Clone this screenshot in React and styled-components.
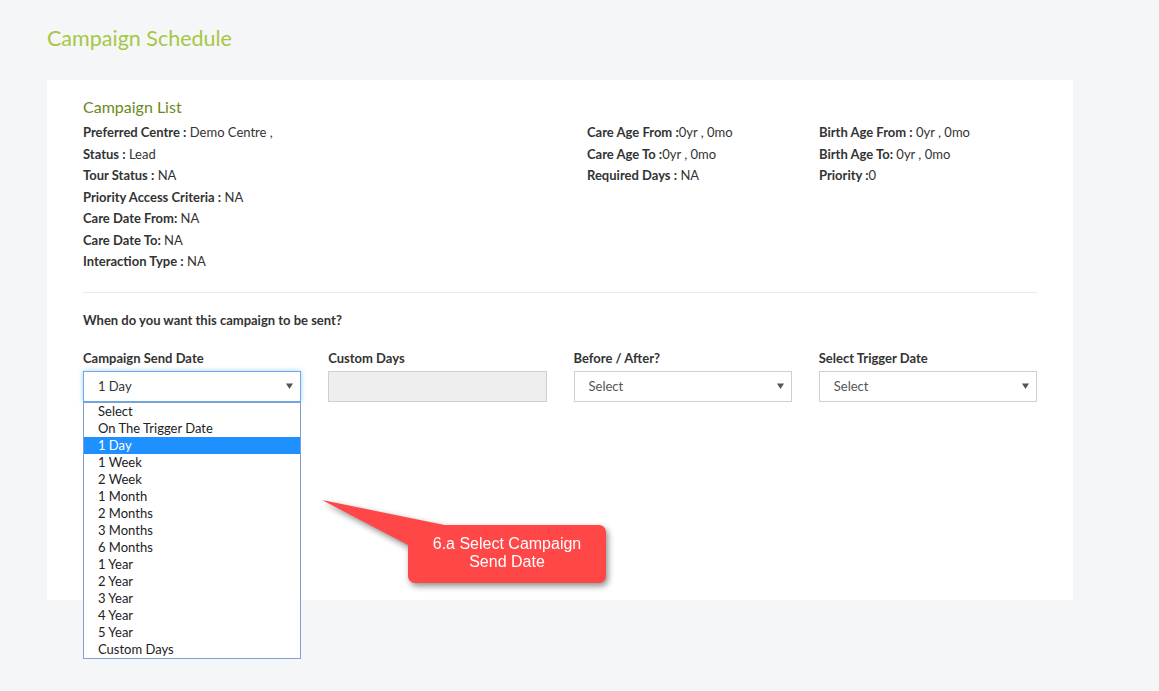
import React from 'react';
import styled, { createGlobalStyle } from 'styled-components';

const GlobalStyle = createGlobalStyle`
  body {
    margin: 0;
    background: #f5f6f8;
    font-family: Lato, "Open Sans", Arial, sans-serif;
    color: #333;
  }
`;

const Page = styled.div`
  padding: 26px 86px 90px 47px;
`;

const PageTitle = styled.h1`
  margin: 0 0 30px;
  font-size: 21.5px;
  line-height: 24px;
  font-weight: 400;
  color: #a6c743;
`;

const Card = styled.div`
  position: relative;
  background: #fff;
  padding: 17px 36px 198px;
`;

const CardTitle = styled.h2`
  margin: 0 0 6px;
  font-size: 16px;
  line-height: 19px;
  font-weight: 400;
  color: #6a8a1e;
`;

const InfoGrid = styled.div`
  display: grid;
  grid-template-columns: 504px 232px 1fr;
`;

const InfoColumn = styled.div`
  display: flex;
  flex-direction: column;
`;

const InfoRow = styled.div`
  font-size: 13px;
  line-height: 21.5px;
  color: #333;
  white-space: nowrap;
  b {
    font-weight: 700;
  }
`;

const Divider = styled.hr`
  border: 0;
  border-top: 1px solid #eaeaea;
  margin: 19px 0 18px;
`;

const Question = styled.p`
  margin: 0 0 20px;
  font-size: 13px;
  line-height: 18px;
  font-weight: 700;
  color: #333;
`;

const FormGrid = styled.div`
  display: grid;
  grid-template-columns: repeat(4, 1fr);
  column-gap: 27px;
`;

const Field = styled.div`
  position: relative;
  display: flex;
  flex-direction: column;
  gap: 4px;
`;

const Label = styled.label`
  font-size: 13px;
  line-height: 18px;
  font-weight: 700;
  color: #333;
`;

const SelectBox = styled.div`
  box-sizing: border-box;
  height: 31px;
  display: flex;
  align-items: center;
  justify-content: space-between;
  padding: 0 7px 0 14px;
  font-size: 13px;
  color: ${p => (p.$open ? '#333' : '#555')};
  background: #fff;
  border: 1px solid ${p => (p.$open ? '#6aa8e8' : '#cfcfcf')};
  box-shadow: ${p => (p.$open ? '0 0 5px rgba(102, 175, 233, 0.6)' : 'none')};
`;

const Input = styled.div`
  box-sizing: border-box;
  height: 31px;
  background: #eee;
  border: 1px solid #cfcfcf;
`;

const Caret = () => (
  <svg width="7" height="6" viewBox="0 0 7 6">
    <path d="M0 0.5h7L3.5 6z" fill="#555" />
  </svg>
);

const OptionList = styled.ul`
  position: absolute;
  top: 53px;
  left: 0;
  right: 0;
  margin: 0;
  padding: 0;
  list-style: none;
  background: #fff;
  border: 1px solid #7f9fd6;
  z-index: 2;
`;

const Option = styled.li`
  height: 17px;
  line-height: 17px;
  padding-left: 14px;
  font-size: 13px;
  color: ${p => (p.$active ? '#fff' : '#222')};
  background: ${p => (p.$active ? '#1e90ff' : 'transparent')};
`;

const Callout = styled.div`
  position: absolute;
  left: 361px;
  top: 445px;
  width: 198px;
  height: 58px;
  filter: drop-shadow(2px 3px 3px rgba(0, 0, 0, 0.45));
  z-index: 3;
`;

const CalloutTail = styled.svg`
  position: absolute;
  left: -86px;
  top: -25px;
`;

const CalloutBody = styled.div`
  position: relative;
  height: 100%;
  box-sizing: border-box;
  padding-top: 10px;
  background: #ff4747;
  border-radius: 7px;
  color: #fff;
  font-family: "Liberation Sans", Arial, sans-serif;
  font-size: 16px;
  line-height: 18px;
  text-align: center;
`;

const leftInfo = [
  ['Preferred Centre :', ' Demo Centre ,'],
  ['Status :', ' Lead'],
  ['Tour Status :', ' NA'],
  ['Priority Access Criteria :', ' NA'],
  ['Care Date From:', ' NA'],
  ['Care Date To:', ' NA'],
  ['Interaction Type :', ' NA'],
];

const careInfo = [
  ['Care Age From :', '0yr , 0mo'],
  ['Care Age To :', '0yr , 0mo'],
  ['Required Days :', ' NA'],
];

const birthInfo = [
  ['Birth Age From :', ' 0yr , 0mo'],
  ['Birth Age To:', ' 0yr , 0mo'],
  ['Priority :', '0'],
];

const sendOptions = [
  'Select', 'On The Trigger Date', '1 Day', '1 Week', '2 Week', '1 Month',
  '2 Months', '3 Months', '6 Months', '1 Year', '2 Year', '3 Year',
  '4 Year', '5 Year', 'Custom Days',
];

const InfoList = ({ rows }) => (
  <InfoColumn>
    {rows.map(([label, value]) => (
      <InfoRow key={label}>
        <b>{label}</b>{value}
      </InfoRow>
    ))}
  </InfoColumn>
);

export default function App() {
  return (
    <>
      <GlobalStyle />
      <Page>
        <PageTitle>Campaign Schedule</PageTitle>
        <Card>
          <CardTitle>Campaign List</CardTitle>
          <InfoGrid>
            <InfoList rows={leftInfo} />
            <InfoList rows={careInfo} />
            <InfoList rows={birthInfo} />
          </InfoGrid>
          <Divider />
          <Question>When do you want this campaign to be sent?</Question>
          <FormGrid>
            <Field>
              <Label>Campaign Send Date</Label>
              <SelectBox $open>
                <span>1 Day</span>
                <Caret />
              </SelectBox>
              <OptionList>
                {sendOptions.map(o => (
                  <Option key={o} $active={o === '1 Day'}>{o}</Option>
                ))}
              </OptionList>
            </Field>
            <Field>
              <Label>Custom Days</Label>
              <Input />
            </Field>
            <Field>
              <Label>Before / After?</Label>
              <SelectBox>
                <span>Select</span>
                <Caret />
              </SelectBox>
            </Field>
            <Field>
              <Label>Select Trigger Date</Label>
              <SelectBox>
                <span>Select</span>
                <Caret />
              </SelectBox>
            </Field>
          </FormGrid>
          <Callout>
            <CalloutTail width="130" height="60" viewBox="0 0 130 60">
              <polygon points="0,0 125,25.5 86,45" fill="#ff4747" />
            </CalloutTail>
            <CalloutBody>
              6.a Select Campaign
              <br />
              Send Date
            </CalloutBody>
          </Callout>
        </Card>
      </Page>
    </>
  );
}
